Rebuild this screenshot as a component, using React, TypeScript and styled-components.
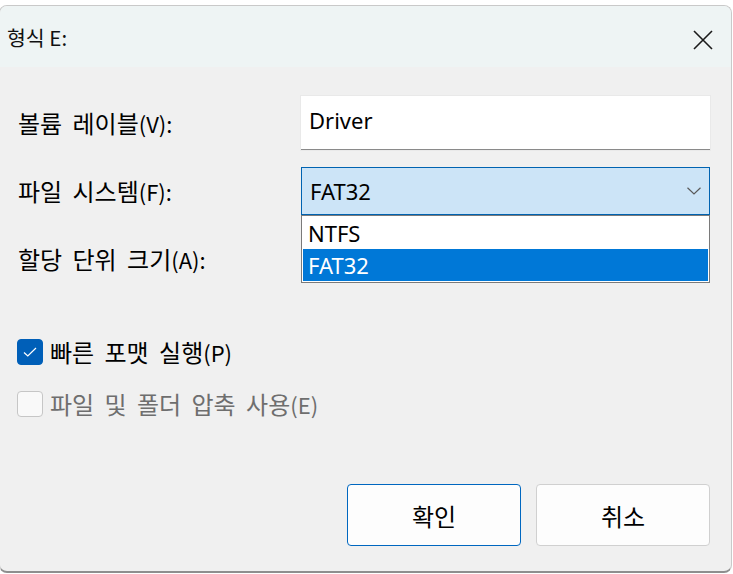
import React from "react";
import styled, { createGlobalStyle } from "styled-components";

const Global = createGlobalStyle`
  html, body { margin: 0; padding: 0; background: #ffffff; }
  body { font-family: "Noto Sans CJK KR", "Noto Sans", sans-serif; color: #000; }
  * { box-sizing: border-box; }
`;

const KR = `"Noto Sans CJK KR", "Noto Sans", sans-serif`;
const LATIN = `"Noto Sans", "Noto Sans CJK KR", sans-serif`;

const Window = styled.div`
  margin-top: 5px;
  margin-left: -1px;
  width: 733px;
  height: 568px;
  display: flex;
  flex-direction: column;
  border: 1px solid #c9c9c9;
  border-bottom: 2px solid #8e8e8e;
  border-radius: 8px;
  overflow: hidden;
  background: #f0f0f0;
`;

const TitleBar = styled.div`
  height: 61px;
  flex: none;
  display: flex;
  align-items: flex-start;
  justify-content: space-between;
  background: #eef4f4;
  padding: 17px 18px 0 7px;
`;

const Title = styled.div`
  font-family: ${KR};
  font-size: 20.5px;
  line-height: 28px;
  color: #111;
`;

const CloseButton = styled.div`
  width: 20px;
  height: 20px;
  margin-top: 7px;
  display: flex;
`;

const Body = styled.div`
  flex: 1;
  display: flex;
  flex-direction: column;
  padding: 29px 21px 25px 18px;
`;

const FormGrid = styled.div`
  display: grid;
  grid-template-columns: 283px 409px;
  grid-template-rows: 54px 48px 54px;
  row-gap: 17px;
  align-items: center;
`;

const Label = styled.div<{ $disabled?: boolean }>`
  font-family: ${KR};
  font-size: 24px;
  line-height: 30px;
  word-spacing: 5px;
  color: ${(p) => (p.$disabled ? "#6e6e6e" : "#000")};
  white-space: nowrap;
`;

const Paren = styled.span`
  font-size: 22px;
  word-spacing: 0;
`;

const TextField = styled.div`
  height: 54px;
  background: #ffffff;
  border-bottom: 1px solid #8a8a8a;
  box-shadow: 0 0 0 1px #e9e9e9;
  padding: 0 8px;
  display: flex;
  align-items: center;
  font-family: ${LATIN};
  font-size: 22px;
  padding-bottom: 6px;
`;

const ComboWrap = styled.div`
  position: relative;
  height: 48px;
`;

const Combo = styled.div`
  height: 48px;
  background: #cce4f7;
  border: 1px solid #0063b1;
  display: flex;
  align-items: center;
  justify-content: space-between;
  padding: 0 8px 0 8px;
  font-family: ${LATIN};
  font-size: 22px;
`;

const DropList = styled.div`
  position: absolute;
  top: 100%;
  left: 0;
  right: 0;
  background: #ffffff;
  border: 1px solid #7a7a7a;
  padding: 1px;
  z-index: 2;
`;

const Option = styled.div<{ $selected?: boolean }>`
  height: 32px;
  display: flex;
  align-items: center;
  padding-left: 5px;
  font-family: ${LATIN};
  font-size: 22px;
  background: ${(p) => (p.$selected ? "#0078d7" : "transparent")};
  color: ${(p) => (p.$selected ? "#ffffff" : "#000")};
`;

const Checks = styled.div`
  margin-top: 53px;
  display: flex;
  flex-direction: column;
  gap: 26px;
`;

const CheckRow = styled.div`
  display: flex;
  align-items: center;
  gap: 7px;
  height: 26px;
  margin-left: -1px;
`;

const Box = styled.div<{ $checked?: boolean }>`
  width: 26px;
  height: 26px;
  flex: none;
  border-radius: 4px;
  display: flex;
  align-items: center;
  justify-content: center;
  background: ${(p) => (p.$checked ? "#005fb8" : "#f9f9f9")};
  border: ${(p) => (p.$checked ? "1px solid #005fb8" : "1.5px solid #c6c6c6")};
`;

const Spacer = styled.div`
  flex: 1;
`;

const Buttons = styled.div`
  display: flex;
  justify-content: flex-end;
  gap: 15px;
`;

const Button = styled.div<{ $primary?: boolean }>`
  width: 174px;
  height: 62px;
  border-radius: 4px;
  background: #fdfdfd;
  border: 1px solid ${(p) => (p.$primary ? "#0067c0" : "#d0d0d0")};
  display: flex;
  align-items: center;
  justify-content: center;
  font-family: ${KR};
  font-size: 24px;
  color: #000;
`;

export default function App() {
  return (
    <>
      <Global />
      <Window>
        <TitleBar>
          <Title>형식 E:</Title>
          <CloseButton>
            <svg width="20" height="20" viewBox="0 0 20 20">
              <path d="M1 1 L19 19 M19 1 L1 19" stroke="#1a1a1a" strokeWidth="1.6" fill="none" />
            </svg>
          </CloseButton>
        </TitleBar>
        <Body>
          <FormGrid>
            <Label>
              볼륨 레이블<Paren>(V):</Paren>
            </Label>
            <TextField>Driver</TextField>
            <Label>
              파일 시스템<Paren>(F):</Paren>
            </Label>
            <ComboWrap>
              <Combo>
                <span>FAT32</span>
                <svg width="14" height="8" viewBox="0 0 14 8">
                  <path d="M0.5 0.8 L7 7 L13.5 0.8" stroke="#5a5a5a" strokeWidth="1.2" fill="none" />
                </svg>
              </Combo>
              <DropList>
                <Option>NTFS</Option>
                <Option $selected>FAT32</Option>
              </DropList>
            </ComboWrap>
            <Label>
              할당 단위 크기<Paren>(A):</Paren>
            </Label>
            <div />
          </FormGrid>
          <Checks>
            <CheckRow>
              <Box $checked>
                <svg width="16" height="12" viewBox="0 0 16 12">
                  <path d="M2 6.5 L5.8 10 L14 2" stroke="#ffffff" strokeWidth="1.2" fill="none" />
                </svg>
              </Box>
              <Label>
                빠른 포맷 실행<Paren>(P)</Paren>
              </Label>
            </CheckRow>
            <CheckRow>
              <Box />
              <Label $disabled>
                파일 및 폴더 압축 사용<Paren>(E)</Paren>
              </Label>
            </CheckRow>
          </Checks>
          <Spacer />
          <Buttons>
            <Button $primary>확인</Button>
            <Button>취소</Button>
          </Buttons>
        </Body>
      </Window>
    </>
  );
}
